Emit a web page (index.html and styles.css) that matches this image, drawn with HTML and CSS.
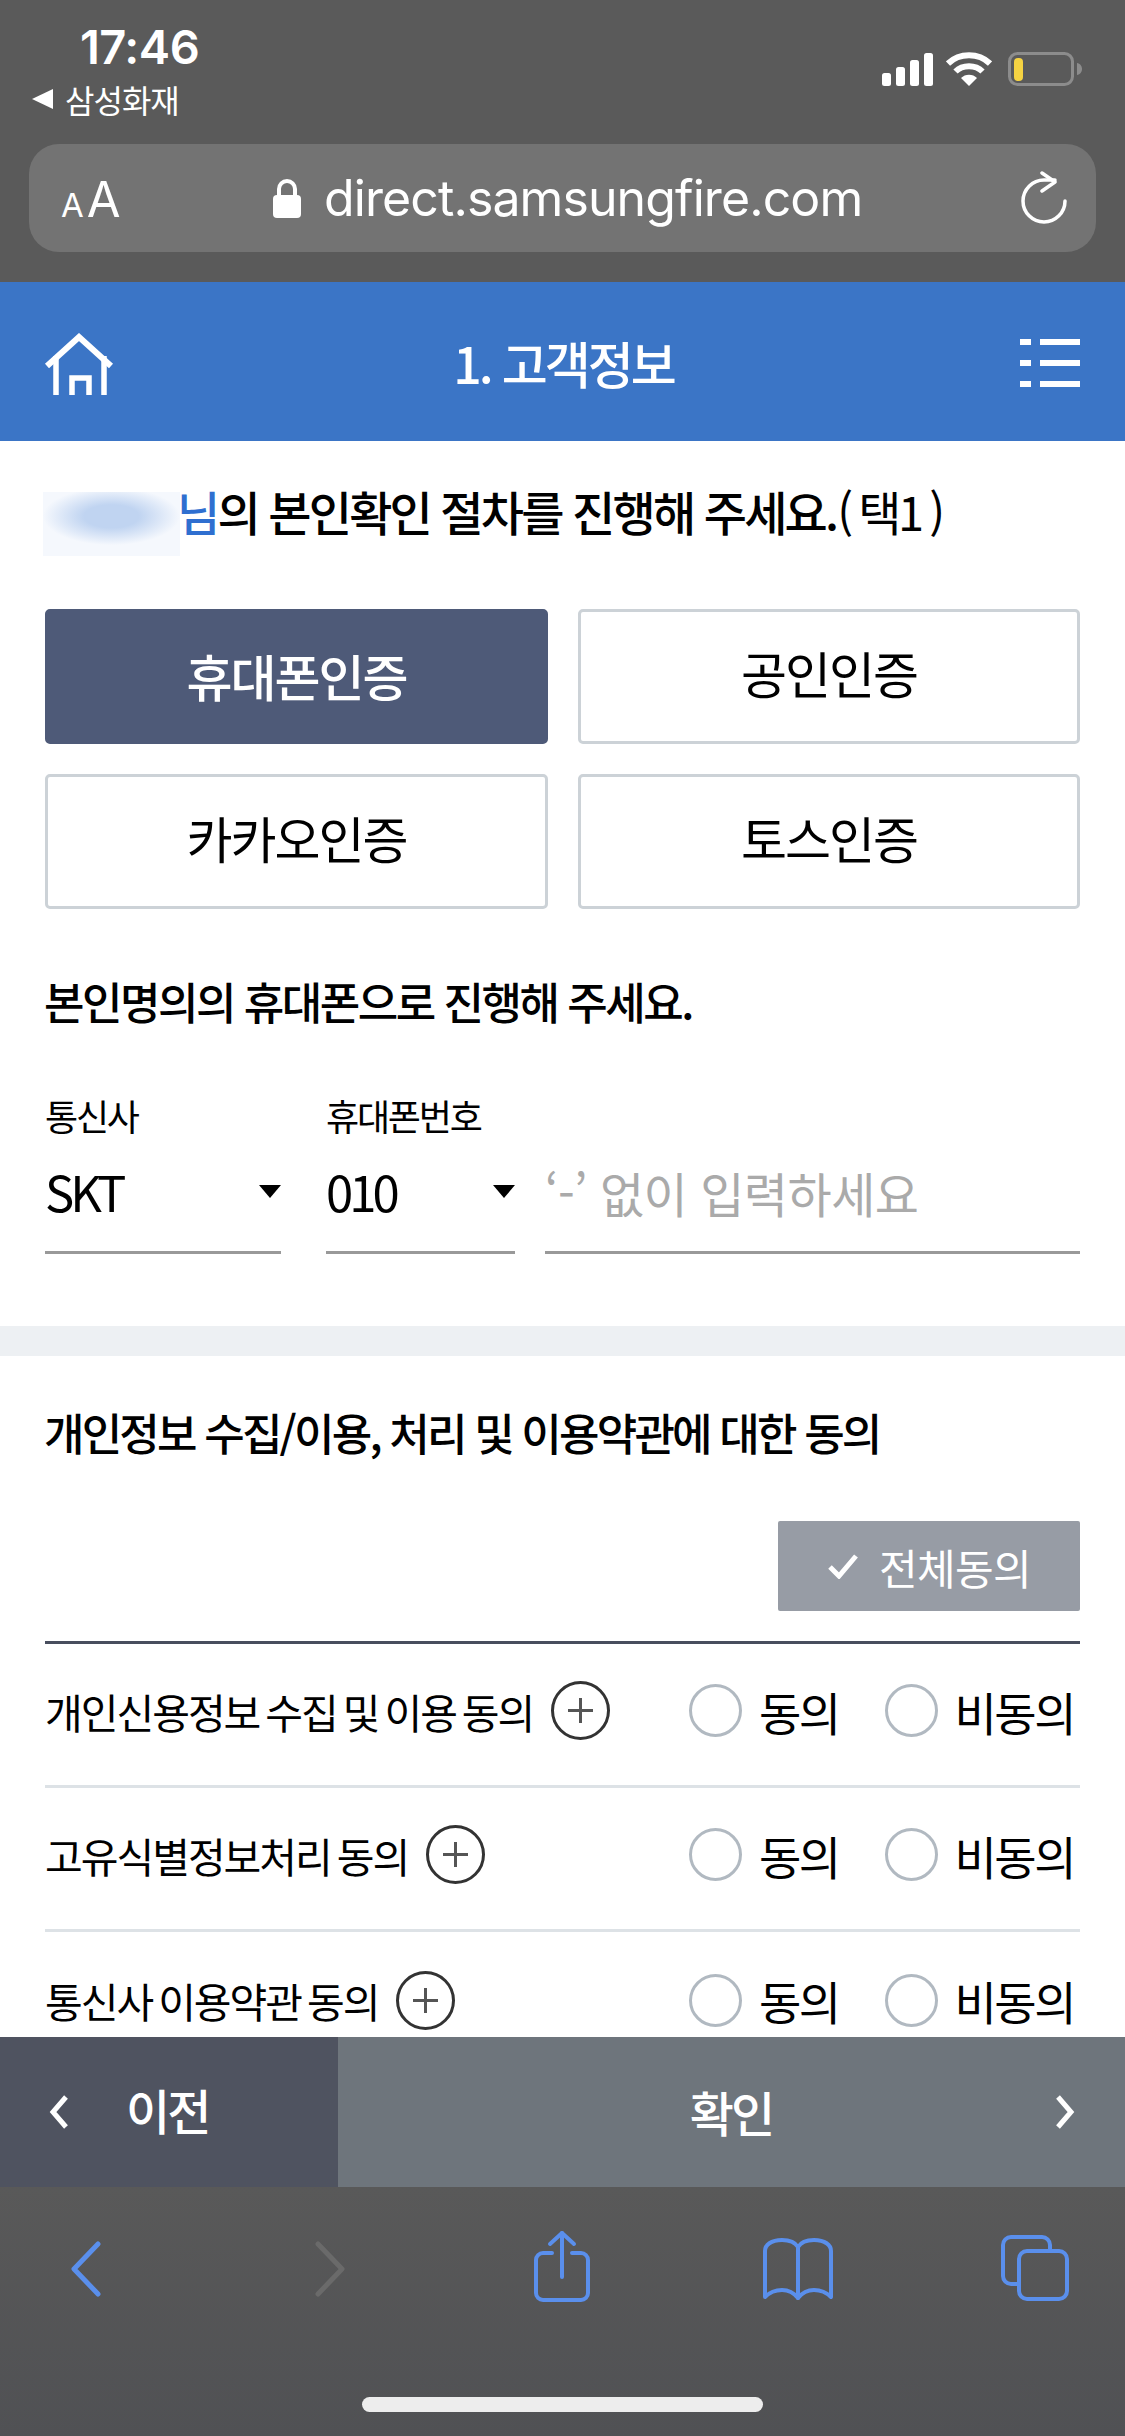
FILE: index.html
```html
<!DOCTYPE html>
<html lang="ko">
<head>
<meta charset="utf-8">
<title>고객정보</title>
<link rel="stylesheet" href="styles.css">
</head>
<body>
<div class="phone">
  <header class="safari-top">
    <div class="status">
      <div class="status-left">
        <div class="time">17:46</div>
        <div class="backapp"><span class="back-tri"></span>삼성화재</div>
      </div>
      <div class="status-right">
        <svg class="sig" width="51" height="33" viewBox="0 0 51 33"><g fill="#fff"><rect x="0" y="20" width="9" height="13" rx="2.5"/><rect x="14" y="14" width="9" height="19" rx="2.5"/><rect x="28" y="7" width="9" height="26" rx="2.5"/><rect x="42" y="0" width="9" height="33" rx="2.5"/></g></svg>
        <svg class="wifi" width="46" height="34" viewBox="0 0 46 34"><path d="M2 11.5C13.5 .5 32.500 .5 44 11.500" fill="none" stroke="#fff" stroke-width="6"/><path d="M9.500 19.500C16.500 12.500 29.500 12.500 36.500 19.500" fill="none" stroke="#fff" stroke-width="6"/><path d="M15 26c4-4.500 12-4.500 16 0L23 34z" fill="#fff"/></svg>
        <svg class="batt" width="74" height="35" viewBox="0 0 74 35"><rect x="1.500" y="1.500" width="63" height="31" rx="8" fill="none" stroke="#8c8c8c" stroke-width="3"/><rect x="6" y="6" width="9" height="23" rx="4" fill="#f6d342"/><path d="M69 11c3 .5 5 3 5 6s-2 5.500-5 6z" fill="#8c8c8c"/></svg>
      </div>
    </div>
    <div class="urlbar">
      <div class="aa"><span class="aa-s">A</span><span class="aa-l">A</span></div>
      <div class="url">
        <svg class="lock" width="28" height="39" viewBox="0 0 28 39"><path d="M6 20v-10a8 8 0 0 1 16 0v10" fill="none" stroke="#fff" stroke-width="4"/><rect x="0" y="16" width="28" height="23" rx="4" fill="#fff"/></svg>
        <span>direct.samsungfire.com</span>
      </div>
      <svg class="reload" width="46" height="54" viewBox="0 0 46 54"><g fill="none" stroke="#fff" stroke-width="3.500" stroke-linecap="round" stroke-linejoin="round"><path d="M44 30a21 21 0 1 1-21-21h11"/><path d="M21 2l13 9-13 9"/></g></svg>
    </div>
  </header>

  <div class="appbar">
    <svg class="home" width="72" height="62" viewBox="0 0 72 62"><g fill="none" stroke="#fff" stroke-width="6"><path d="M4 33L36 4l32 29"/></g><g fill="none" stroke="#fff" stroke-width="5.500"><path d="M13 23v39M61 23v39"/><path d="M29 62V45h17v17"/></g></svg>
    <h1 class="apptitle">1. 고객정보</h1>
    <div class="menu"><i></i><b></b><i></i><b></b><i></i><b></b></div>
  </div>

  <main class="content">
    <section class="sec-auth">
      <h2 class="lead"><span class="blurred"></span><span class="hl">님</span>의 본인확인 절차를 진행해 주세요.<span class="lead-note">( 택1 )</span></h2>
      <div class="authgrid">
        <div class="authbtn on">휴대폰인증</div>
        <div class="authbtn">공인인증</div>
        <div class="authbtn">카카오인증</div>
        <div class="authbtn">토스인증</div>
      </div>
      <h3 class="sub">본인명의의 휴대폰으로 진행해 주세요.</h3>
      <div class="phoneform">
        <div class="col col-telco">
          <div class="lbl">통신사</div>
          <div class="field"><span>SKT</span><em class="caret"></em></div>
        </div>
        <div class="col col-prefix">
          <div class="lbl">휴대폰번호</div>
          <div class="field"><span>010</span><em class="caret"></em></div>
        </div>
        <div class="col col-num">
          <div class="field ph"><span>‘-’ 없이 입력하세요</span></div>
        </div>
      </div>
    </section>
    <section class="sec-agree">
      <h3 class="agree-title">개인정보 수집/이용, 처리 및 이용약관에 대한 동의</h3>
      <div class="allrow"><div class="allbtn"><svg width="32" height="26" viewBox="0 0 32 26"><path d="M3 14l9 9L29 3" fill="none" stroke="#fff" stroke-width="5"/></svg>전체동의</div></div>
      <div class="agree-row">
        <div class="agree-name">개인신용정보 수집 및 이용 동의<span class="plus"></span></div>
        <label class="radio"><i></i>동의</label><label class="radio"><i></i>비동의</label>
      </div>
      <div class="agree-row">
        <div class="agree-name">고유식별정보처리 동의<span class="plus"></span></div>
        <label class="radio"><i></i>동의</label><label class="radio"><i></i>비동의</label>
      </div>
      <div class="agree-row last">
        <div class="agree-name">통신사 이용약관 동의<span class="plus"></span></div>
        <label class="radio"><i></i>동의</label><label class="radio"><i></i>비동의</label>
      </div>
    </section>
  </main>

  <nav class="stepbar">
    <div class="prev">
      <svg width="22" height="36" viewBox="0 0 22 36"><path d="M18 3L5 18l13 15" fill="none" stroke="#fff" stroke-width="5"/></svg>
      <span>이전</span>
    </div>
    <div class="next">
      <span>확인</span>
      <svg width="22" height="36" viewBox="0 0 22 36"><path d="M4 3l13 15L4 33" fill="none" stroke="#fff" stroke-width="5"/></svg>
    </div>
  </nav>

  <footer class="safari-bottom">
    <div class="tools">
      <svg class="t-back" width="32" height="56" viewBox="0 0 32 56"><path d="M28 3L4 28l24 25" fill="none" stroke="#5a8fec" stroke-width="5" stroke-linecap="round" stroke-linejoin="round"/></svg>
      <svg class="t-fwd" width="32" height="56" viewBox="0 0 32 56"><path d="M4 3l24 25L4 53" fill="none" stroke="#6a6a6a" stroke-width="5" stroke-linecap="round" stroke-linejoin="round"/></svg>
      <svg class="t-share" width="56" height="72" viewBox="0 0 56 72"><g fill="none" stroke="#5a8fec" stroke-width="4" stroke-linecap="round" stroke-linejoin="round"><path d="M18 23H9a7 7 0 0 0-7 7v33a7 7 0 0 0 7 7h38a7 7 0 0 0 7-7V30a7 7 0 0 0-7-7h-9"/><path d="M28 47V3"/><path d="M16 14L28 3l12 11"/></g></svg>
      <svg class="t-book" width="72" height="62" viewBox="0 0 72 62"><g fill="none" stroke="#5a8fec" stroke-width="4" stroke-linecap="round" stroke-linejoin="round"><path d="M36 9C33 4 27 2 20 2 9 2 3 7 3 13V59C9 53 14 52 20 52 27 52 32 55 36 60 40 55 45 52 52 52 58 52 63 53 69 59V13C69 7 63 2 52 2 45 2 39 4 36 9Z"/><path d="M36 9V60"/></g></svg>
      <svg class="t-tabs" width="68" height="66" viewBox="0 0 68 66"><g fill="none" stroke="#5a8fec" stroke-width="4"><path d="M49 15v-5a8 8 0 0 0-8-8H10a8 8 0 0 0-8 8v31a8 8 0 0 0 8 8h6"/><rect x="18" y="16" width="48" height="48" rx="8"/></g></svg>
    </div>
    <div class="homebar"></div>
  </footer>
</div>
</body>
</html>
```
FILE: styles.css
```css
* { box-sizing: border-box; }
html, body { margin: 0; padding: 0; background: #fff; }
body { font-family: "Noto Sans CJK KR", "Noto Sans", sans-serif; color: #000; }
h1, h2, h3 { margin: 0; font-weight: 500; }

.phone { width: 1125px; height: 2436px; display: flex; flex-direction: column; overflow: hidden; }

/* Safari top */
.safari-top { height: 282px; background: #5a5a5a; padding-top: 20px; flex: none; }
.status { display: flex; justify-content: space-between; align-items: flex-start; height: 124px; padding: 0 43px 0 32px; }
.status-left { display: flex; flex-direction: column; }
.time { font: 600 47px/54px Inter, sans-serif; color: #fff; margin-left: 48px; letter-spacing: -.5px; }
.backapp { display: flex; align-items: center; font-size: 32px; line-height: 40px; color: #fff; letter-spacing: -1px; margin-top: 5px; }
.back-tri { width: 0; height: 0; border: 10px solid transparent; border-left: 0; border-right: 21px solid #fff; margin-right: 12px; }
.status-right { display: flex; align-items: flex-start; padding-top: 32px; }
.sig { margin-right: 13px; margin-top: 1px; }
.wifi { margin-right: 16px; }
.urlbar { margin: 0 29px; height: 108px; background: #737373; border-radius: 30px; display: flex; align-items: center; padding: 0 29px 0 32px; }
.aa { display: flex; align-items: baseline; color: #fff; font-family: Inter, sans-serif; width: 120px; padding-top: 2px; }
.aa-s { font-size: 33px; margin-right: 3px; }
.aa-l { font-size: 49px; }
.url { flex: 1; display: flex; align-items: center; color: #fff; font: 400 50px/60px Inter, sans-serif; letter-spacing: -.9px; padding-left: 92px; }
.lock { margin-right: 23px; }
.reload { flex: none; }

/* App bar */
.appbar { height: 159px; background: #3b75c6; flex: none; display: grid; grid-template-columns: 72px 1fr 60px; align-items: center; padding: 0 45px 0 43px; }
.home { margin-top: 4px; }
.apptitle { color: #fff; font-size: 50px; font-weight: 500; letter-spacing: -3px; text-align: center; margin-right: 8px; }
.menu { display: grid; grid-template-columns: 11px 40px; column-gap: 9px; row-gap: 15px; margin-top: 2px; }
.menu i, .menu b { display: block; height: 6px; background: #fff; }

/* Content */
.content { flex: 1; min-height: 0; overflow: hidden; background: #fff; }
.sec-auth { padding: 51px 45px 72px; border-bottom: 30px solid #edf0f3; }
.lead { display: flex; align-items: flex-start; font-size: 47px; line-height: 38px; letter-spacing: -2.800px; font-weight: 500; margin-left: -2px; }
.blurred { width: 137px; height: 64px; background: radial-gradient(ellipse 50% 45% at 50% 38%, #c0d4f1 40%, #f5f8fd 100%); }
.hl { color: #2f6fd0; margin-left: -3px; }
.lead-note { font-weight: 400; letter-spacing: -3.500px; word-spacing: -1px; margin-left: 1px; }
.authgrid { display: grid; grid-template-columns: 503px 502px; gap: 30px; margin-top: 53px; }
.authbtn { height: 135px; padding-bottom: 9px; display: flex; align-items: center; justify-content: center; border: 3px solid #ccd2d7; border-radius: 5px; font-size: 50px; letter-spacing: -2px; background: #fff; }
.authbtn.on { background: #4e5a78; border-color: #4e5a78; color: #fff; font-weight: 500; padding-bottom: 4px; }
.sub { font-size: 44px; line-height: 60px; letter-spacing: -2.500px; margin-top: 62px; font-weight: 500; margin-left: -1px; }
.phoneform { display: flex; align-items: flex-end; margin-top: 61px; }
.col { flex: none; }
.col-telco { width: 236px; margin-right: 45px; }
.col-prefix { width: 189px; margin-right: 30px; }
.col-num { width: 535px; }
.lbl { font-size: 36px; line-height: 46px; letter-spacing: -2.200px; }
.field { display: flex; align-items: center; justify-content: space-between; height: 116px; padding-bottom: 9px; border-bottom: 3px solid #999; font-size: 49px; letter-spacing: -4px; }
.caret { border: 11.500px solid transparent; border-top: 13px solid #000; border-bottom: 0; margin-top: 2px; }
.ph { color: #aaa; letter-spacing: -.5px; font-size: 48px; padding-bottom: 5px; }

.sec-agree { padding: 46px 45px 0; }
.agree-title { font-size: 44px; line-height: 60px; letter-spacing: -2.800px; font-weight: 500; margin-left: -1px; }
.allrow { display: flex; justify-content: flex-end; margin-top: 59px; }
.allbtn { width: 302px; height: 90px; background: #979ca5; border-radius: 2px; color: #fff; font-size: 42px; letter-spacing: -.7px; display: flex; align-items: center; justify-content: center; gap: 20px; }
.agree-row { height: 144px; padding-bottom: 8px; display: flex; align-items: center; border-bottom: 3px solid #dde2e6; font-size: 41px; letter-spacing: -2px; word-spacing: -3.500px; }
.allrow + .agree-row { border-top: 3px solid #484e5e; margin-top: 30px; height: 147px; }
.agree-row.last { border-bottom: 0; }
.agree-name { flex: 1; display: flex; align-items: center; white-space: nowrap; }
.plus { width: 59px; height: 59px; margin-left: 18px; border: 3px solid #333; border-radius: 50%; position: relative; flex: none; }
.plus::before, .plus::after { content: ""; position: absolute; background: #555; left: 50%; top: 50%; }
.plus::before { width: 25px; height: 3px; margin: -1.5px 0 0 -12.5px; }
.plus::after { width: 3px; height: 25px; margin: -12.5px 0 0 -1.500px; }
.radio { display: flex; align-items: center; flex: none; width: 195.500px; font-size: 46px; letter-spacing: -2.500px; white-space: nowrap; }
.radio i { width: 53px; height: 53px; border: 3px solid #b1b9c1; border-radius: 50%; margin-right: 17px; flex: none; }

/* Step bar */
.stepbar { height: 150px; flex: none; display: grid; grid-template-columns: 338px 1fr; color: #fff; font-size: 48px; font-weight: 500; letter-spacing: -3px; }
.prev { background: #4f5360; display: flex; align-items: center; padding: 0 0 7px 48px; gap: 56px; }
.prev svg { margin-top: 7px; }
.next { background: #6e757c; display: flex; align-items: center; justify-content: space-between; padding: 0 49px 0 0; }
.next span { margin: 0 auto; padding-left: 70px; padding-bottom: 3px; }
.next svg { flex: none; }

/* Safari bottom */
.safari-bottom { height: 249px; flex: none; background: linear-gradient(#595959, #505154); display: flex; flex-direction: column; }
.tools { display: flex; align-items: flex-start; padding: 43px 0 0; height: 210px; }
.t-back { margin: 11px 0 0 70px; }
.t-fwd { margin: 11px 0 0 212px; }
.t-share { margin: 0 0 0 188px; }
.t-book { margin: 8px 0 0 172px; }
.t-tabs { margin: 5px 0 0 167px; }
.homebar { width: 401px; height: 15px; background: #ededed; border-radius: 8px; margin: 0 auto; }
```
